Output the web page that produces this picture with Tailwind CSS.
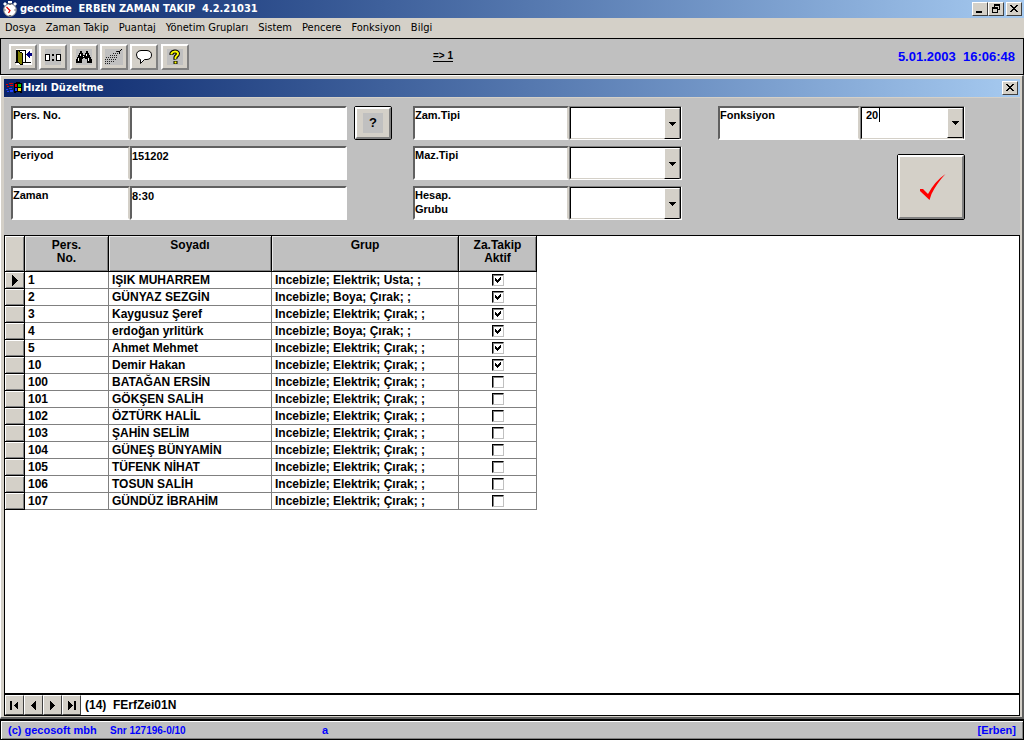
<!DOCTYPE html>
<html lang="tr">
<head>
<meta charset="utf-8">
<title>gecotime ERBEN ZAMAN TAKIP</title>
<script src="https://cdn.jsdelivr.net/npm/@tailwindcss/browser@4"></script>
</head>
<body class="flex h-screen flex-col overflow-hidden bg-[#d4d0c8] font-['Liberation_Sans',Arial,sans-serif] text-[11px] font-bold text-black">

<!-- Title bar -->
<header class="flex h-[18px] shrink-0 items-center bg-linear-to-r from-[#0a246a] to-[#a6caf0] pr-[2px] pl-[2px]">
  <svg class="mr-[2px] size-4" viewBox="0 0 16 16" aria-hidden="true">
    <path d="M6 0h4v2h-4zM1 3l2-2 2 2-2 2zM11 3l2-2 2 2-2 2z" fill="#fff"/>
    <circle cx="8" cy="9" r="6.3" fill="#fff" stroke="#888" stroke-width="1"/>
    <path d="M8 3v1M8 14v1M2.500 9h1M12.500 9h1" stroke="#000"/>
    <path d="M4.500 6L8 9.500L6.500 12" stroke="#e00000" stroke-width="1.300" fill="none"/>
  </svg>
  <h1 class="grow font-['DejaVu_Sans_Condensed','DejaVu_Sans',sans-serif] text-[11px] leading-[18px] whitespace-pre text-white">gecotime  ERBEN ZAMAN TAKIP  4.2.21031</h1>
  <button aria-label="Simge durumuna küçült" class="flex h-[14px] w-4 items-center justify-center border border-t-white border-r-[#404040] border-b-[#404040] border-l-white bg-[#d4d0c8]">
    <svg width="12" height="10" shape-rendering="crispEdges"><path d="M2 7h6v2H2z"/></svg>
  </button>
  <button aria-label="Önceki boyut" class="mr-[2px] flex h-[14px] w-4 items-center justify-center border border-t-white border-r-[#404040] border-b-[#404040] border-l-white bg-[#d4d0c8]">
    <svg width="12" height="10" shape-rendering="crispEdges"><path d="M4 0h6v6H8V5h1V2H5v1H4zM2 3h6v6H2zM3 5v3h4V5z" fill-rule="evenodd"/></svg>
  </button>
  <button aria-label="Kapat" class="flex h-[14px] w-4 items-center justify-center border border-t-white border-r-[#404040] border-b-[#404040] border-l-white bg-[#d4d0c8]">
    <svg width="12" height="10" shape-rendering="crispEdges"><path d="M2 1h2v1h1v1h2V2h1V1h2v1H9v1H8v1H7v1h1v1h1v1h1v1H8V7H7V6H5v1H4v1H2V7h1V6h1V5h1V4H4V3H3V2H2z"/></svg>
  </button>
</header>

<!-- Menu -->
<nav class="flex h-5 shrink-0 items-center gap-[10px] px-[5px] font-['DejaVu_Sans_Condensed','DejaVu_Sans',sans-serif] text-[11px] font-normal">
  <a href="#">Dosya</a><a href="#">Zaman Takip</a><a href="#">Puantaj</a><a href="#">Yönetim Grupları</a><a href="#">Sistem</a><a href="#">Pencere</a><a href="#">Fonksiyon</a><a href="#">Bilgi</a>
</nav>

<!-- Toolbar -->
<div class="grid h-[37px] shrink-0 grid-cols-[1fr_auto_1fr] items-center border border-black bg-[#c0c0c0] px-2">
  <div class="flex gap-[2px]">
    <button aria-label="Çıkış" class="flex h-[26px] w-7 items-center justify-center border-2 border-t-white border-r-[#808080] border-b-[#808080] border-l-white bg-[#d4d0c8]">
      <svg width="17" height="16" shape-rendering="crispEdges"><path fill="#fff" d="M1 0h16v16H1z"/><path d="M1 1h10v12h5v1H0v-1h1zM2 2v11h8V2z" fill-rule="evenodd"/><path d="M2 1l5 3v12l-5-3z" fill="#808000" stroke="#000"/><path d="M11 5h1V4h1V3h1V2h1v2h2v3h-2v2h-1V8h-1V7h-1V6h-1z" fill="#000080"/></svg>
    </button>
    <button aria-label="Saat" class="flex h-[26px] w-7 items-center justify-center border-2 border-t-white border-r-[#808080] border-b-[#808080] border-l-white bg-[#d4d0c8]">
      <svg width="16" height="16" shape-rendering="crispEdges"><path fill="#c0c0c0" d="M0 0h16v16H0z"/><path fill="#fff" stroke="#000" d="M.5 5.500h4v6h-4zM11.500 5.500h4v6h-4z"/><path d="M7 5h2v2H7zM7 10h2v2H7z"/></svg>
    </button>
    <button aria-label="Bul" class="ml-px flex h-[26px] w-7 items-center justify-center border-2 border-t-white border-r-[#808080] border-b-[#808080] border-l-white bg-[#d4d0c8]">
      <svg width="16" height="16" shape-rendering="crispEdges"><path fill="#c0c0c0" d="M0 0h16v16H0z"/><path d="M4 2h2v2h1v2h2V4h1V2h2v2h1v2h1v2h1v2h1v4h-5v-4H9V9H7v1H6v4H0v-4h1V8h1V6h1V4h1z"/><path fill="#fff" d="M4 5h1v2H4zM2 9h1v3H2zM10 5h1v2h-1zM12 9h1v3h-1zM7 7h1v1H7z"/></svg>
    </button>
    <button aria-label="Grafik" class="flex h-[26px] w-7 items-center justify-center border-2 border-t-white border-r-[#808080] border-b-[#808080] border-l-white bg-[#d4d0c8]">
      <svg width="18" height="18" shape-rendering="crispEdges">
        <path fill="#c0c0c0" d="M0 1h18v16H0z"/>
        <path stroke="#222" fill="none" stroke-dasharray="1 1" d="M11 3.500h4M8 5.500h6M5 7.500h8M1 9.500h12M0 11.500h11M0 13.500h9M0 15.500h6"/>
        <path stroke="#000" fill="none" d="M12 3.500h3M14.500 3v3M15 2.500h1M16 1.500h1"/>
      </svg>
    </button>
    <button aria-label="Mesaj" class="flex h-[26px] w-7 items-center justify-center border-2 border-t-white border-r-[#808080] border-b-[#808080] border-l-white bg-[#d4d0c8]">
      <svg width="18" height="16"><path d="M6 1.500h6q4.500.5 4.500 4.500t-4.500 4.500H9.500l-4 4v-4q-4-.5-4-4.500T6 1.500z" fill="#fff" stroke="#000"/></svg>
    </button>
    <button aria-label="Yardım" class="ml-px flex h-[26px] w-7 items-center justify-center border-2 border-t-white border-r-[#808080] border-b-[#808080] border-l-white bg-[#d4d0c8]">
      <svg width="16" height="16"><path fill="#c0c0c0" d="M0 0h16v16H0z"/><path d="M4.500 6V4.500Q5.500 2.500 8 2.500t3 2q0 1.500-1.500 2.500T8.500 10.500M8.500 12v3" fill="none" stroke="#000" stroke-width="4"/><path d="M4.500 5.500V4.500Q5.500 2.500 8 2.500t3 2q0 1.500-1.500 2.500T8.500 10M8.500 12.500v2" fill="none" stroke="#ff0" stroke-width="2"/></svg>
    </button>
  </div>
  <a href="#" class="mr-[138px] border-b border-black text-[10px] leading-[10px]">=&gt; 1</a>
  <time class="justify-self-end text-[13px] whitespace-pre text-[#0000ff]">5.01.2003  16:06:48</time>
</div>

<!-- Child window -->
<main class="flex min-h-0 grow flex-col border-t border-r-2 border-b-2 border-l border-t-white border-r-[#606060] border-b-[#606060] border-l-white pt-[3px] pr-[2px] pb-px pl-[3px]">
  <div class="flex h-[18px] shrink-0 items-center bg-linear-to-r from-[#0a246a] to-[#a6caf0] pr-[2px] pl-[2px]">
    <svg class="mr-px h-[14px] w-4" viewBox="0 0 16 14" shape-rendering="crispEdges" aria-hidden="true">
      <path fill="#000" d="M8 2l4-1 4 1v10l-4-1-4 1z"/>
      <path fill="#e00000" d="M0 3h2v1H0zM3 2h2v1H3zM1 5h2v1H1zM4 4h3v1H4zM5 2h2v1H5zM9 3h2v3H9z"/>
      <path fill="#00d000" d="M12 3h3v3h-3z"/>
      <path fill="#2040ff" d="M0 8h2v1H0zM3 7h3v1H3zM1 10h2v1H1zM4 9h3v2H4zM9 7h2v3H9z"/>
      <path fill="#ffe000" d="M12 7h3v3h-3z"/>
    </svg>
    <h2 class="grow font-['DejaVu_Sans_Condensed','DejaVu_Sans',sans-serif] text-[11px] text-white">Hızlı Düzeltme</h2>
    <button aria-label="Pencereyi kapat" class="flex h-[14px] w-4 items-center justify-center border border-t-white border-r-[#404040] border-b-[#404040] border-l-white bg-[#d4d0c8]">
      <svg width="12" height="10" shape-rendering="crispEdges"><path d="M2 1h2v1h1v1h2V2h1V1h2v1H9v1H8v1H7v1h1v1h1v1h1v1H8V7H7V6H5v1H4v1H2V7h1V6h1V5h1V4H4V3H3V2H2z"/></svg>
    </button>
  </div>

  <!-- Form -->
  <form class="mt-px flex shrink-0 items-start bg-[#c0c0c0] pt-2 pb-[15px] pl-[7px] leading-[14px]">
    <div class="grid grid-cols-[119px_217px] gap-y-[6px]">
      <label for="pers" class="h-[34px] border-2 border-t-[#606060] border-r-[#d4d0c8] border-b-white border-l-[#606060] bg-white">Pers. No.</label>
      <input id="pers" class="h-[34px] min-w-0 border-2 border-t-[#606060] border-r-white border-b-white border-l-[#606060] bg-white pb-[14px]">
      <label for="periyod" class="h-[34px] border-2 border-t-[#606060] border-r-[#d4d0c8] border-b-white border-l-[#606060] bg-white">Periyod</label>
      <input id="periyod" value="151202" class="h-[34px] min-w-0 border-2 border-t-[#606060] border-r-white border-b-white border-l-[#606060] bg-white pb-[14px]">
      <label for="zaman" class="h-[34px] border-2 border-t-[#606060] border-r-[#d4d0c8] border-b-white border-l-[#606060] bg-white">Zaman</label>
      <input id="zaman" value="8:30" class="h-[34px] min-w-0 border-2 border-t-[#606060] border-r-white border-b-white border-l-[#606060] bg-white pb-[14px]">
    </div>
    <button type="button" class="ml-[7px] h-[34px] w-[38px] rounded-[2px] border border-black">
      <span class="flex h-full items-center justify-center border-2 border-t-white border-r-[#808080] border-b-[#808080] border-l-white bg-[#d4d0c8]"><span class="w-5 bg-[#c0c0c0] text-[13px] leading-5">?</span></span>
    </button>

    <div class="ml-[21px] grid grid-cols-[156px_113px] gap-y-[6px]">
      <label for="zam" class="h-[34px] border-2 border-t-[#606060] border-r-[#d4d0c8] border-b-white border-l-[#606060] bg-white">Zam.Tipi</label>
      <div class="grid h-[34px] border border-t-[#808080] border-r-white border-b-white border-l-[#808080]">
        <select id="zam" class="col-start-1 row-start-1 appearance-none border border-b-[#d4d0c8] border-t-black border-x-black bg-white"><option></option></select>
        <span class="pointer-events-none col-start-1 row-start-1 mt-px mr-px flex w-4 items-center justify-center justify-self-end border border-t-white border-r-[#808080] border-b-black border-l-white bg-[#d4d0c8]"><svg width="7" height="4" shape-rendering="crispEdges"><path d="M0 0h7v1H6v1H5v1H4v1H3V3H2V2H1V1H0z"/></svg></span>
      </div>
      <label for="maz" class="h-[34px] border-2 border-t-[#606060] border-r-[#d4d0c8] border-b-white border-l-[#606060] bg-white">Maz.Tipi</label>
      <div class="grid h-[34px] border border-t-[#808080] border-r-white border-b-white border-l-[#808080]">
        <select id="maz" class="col-start-1 row-start-1 appearance-none border border-b-[#d4d0c8] border-t-black border-x-black bg-white"><option></option></select>
        <span class="pointer-events-none col-start-1 row-start-1 mt-px mr-px flex w-4 items-center justify-center justify-self-end border border-t-white border-r-[#808080] border-b-black border-l-white bg-[#d4d0c8]"><svg width="7" height="4" shape-rendering="crispEdges"><path d="M0 0h7v1H6v1H5v1H4v1H3V3H2V2H1V1H0z"/></svg></span>
      </div>
      <label for="hesap" class="h-[34px] border-2 border-t-[#606060] border-r-[#d4d0c8] border-b-white border-l-[#606060] bg-white">Hesap.<br>Grubu</label>
      <div class="grid h-[34px] border border-t-[#808080] border-r-white border-b-white border-l-[#808080]">
        <select id="hesap" class="col-start-1 row-start-1 appearance-none border border-b-[#d4d0c8] border-t-black border-x-black bg-white"><option></option></select>
        <span class="pointer-events-none col-start-1 row-start-1 mt-px mr-px flex w-4 items-center justify-center justify-self-end border border-t-white border-r-[#808080] border-b-black border-l-white bg-[#d4d0c8]"><svg width="7" height="4" shape-rendering="crispEdges"><path d="M0 0h7v1H6v1H5v1H4v1H3V3H2V2H1V1H0z"/></svg></span>
      </div>
    </div>

    <div class="ml-9 flex flex-col items-end gap-[14px]">
      <div class="grid grid-cols-[142px_105px]">
        <label for="fonk" class="h-[34px] border-2 border-t-[#606060] border-r-[#d4d0c8] border-b-white border-l-[#606060] bg-white">Fonksiyon</label>
        <div class="h-[34px] border border-t-[#808080] border-r-white border-b-white border-l-[#808080]">
          <div class="flex h-full border border-x-black border-t-black border-b-[#d4d0c8] bg-white pl-1">
            <input id="fonk" value="20" class="h-[14px] w-[13px] outline-none">
            <span class="h-[14px] w-px bg-black"></span>
            <button type="button" aria-label="Listeyi aç" class="ml-auto flex w-4 items-center justify-center border border-t-white border-r-[#808080] border-b-black border-l-white bg-[#d4d0c8]"><svg width="7" height="4" shape-rendering="crispEdges"><path d="M0 0h7v1H6v1H5v1H4v1H3V3H2V2H1V1H0z"/></svg></button>
          </div>
        </div>
      </div>
      <button type="submit" aria-label="Onayla" class="h-[66px] w-[68px] rounded-[2px] border border-black">
        <span class="flex h-full items-center justify-center border-2 border-t-white border-r-[#808080] border-b-[#808080] border-l-white bg-[#d4d0c8]"><svg class="ml-1" width="26" height="26"><path d="M0 15h3l5 5Q15 7 25.500 0 17 9 11.500 20L9.500 26 0 17z" fill="#f00"/></svg></span>
      </button>
    </div>
  </form>

  <!-- Records -->
  <section class="flex min-h-0 grow flex-col border-x border-t border-black bg-white">
    <table class="w-[532px] table-fixed border-separate border-spacing-0 text-left text-xs leading-4">
      <colgroup><col class="w-5"><col class="w-[84px]"><col class="w-[163px]"><col class="w-[187px]"><col class="w-[78px]"></colgroup>
      <thead class="bg-[#c0c0c0] text-center leading-[13px]">
        <tr class="h-9 *:border-r *:border-b *:border-black *:p-0 *:align-top">
          <td class="bg-[#d4d0c8] shadow-[inset_1px_1px_#fff,inset_-1px_-1px_#808080]"></td>
          <th class="shadow-[inset_1px_1px_#e8e8e8,inset_-1px_-1px_#808080]"><div class="pt-[3px]">Pers.<br>No.</div></th>
          <th class="shadow-[inset_1px_1px_#e8e8e8,inset_-1px_-1px_#808080]"><div class="pt-[3px]">Soyadı</div></th>
          <th class="shadow-[inset_1px_1px_#e8e8e8,inset_-1px_-1px_#808080]"><div class="pt-[3px]">Grup</div></th>
          <th class="shadow-[inset_1px_1px_#e8e8e8,inset_-1px_-1px_#808080]"><div class="pt-[3px]">Za.Takip<br>Aktif</div></th>
        </tr>
      </thead>
      <tbody id="rows"></tbody>
    </table>
  </section>
  <div class="flex h-[23px] shrink-0 items-stretch border-x border-t-2 border-b border-black bg-white text-xs">
    <button aria-label="İlk kayıt" class="flex w-[19px] items-center justify-center border border-t-white border-r-[#404040] border-b-[#404040] border-l-white bg-[#d4d0c8]"><svg width="9" height="9" shape-rendering="crispEdges"><path d="M0 0h2v9H0zM8 0v9L3.500 4.500z"/></svg></button>
    <button aria-label="Önceki kayıt" class="flex w-[19px] items-center justify-center border border-t-white border-r-[#404040] border-b-[#404040] border-l-white bg-[#d4d0c8]"><svg width="9" height="9" shape-rendering="crispEdges"><path d="M7 0v9L2 4.500z"/></svg></button>
    <button aria-label="Sonraki kayıt" class="flex w-[19px] items-center justify-center border border-t-white border-r-[#404040] border-b-[#404040] border-l-white bg-[#d4d0c8]"><svg width="9" height="9" shape-rendering="crispEdges"><path d="M2 0v9l5-4.500z"/></svg></button>
    <button aria-label="Son kayıt" class="flex w-[19px] items-center justify-center border border-t-white border-r-[#404040] border-b-[#404040] border-l-white bg-[#d4d0c8]"><svg width="9" height="9" shape-rendering="crispEdges"><path d="M7 0h2v9H7zM1 0v9l4.500-4.500z"/></svg></button>
    <span class="self-center pl-1 whitespace-pre">(14)  FErfZei01N</span>
  </div>
</main>

<!-- Status bar -->
<footer class="grid h-[21px] shrink-0 grid-cols-[102px_212px_1fr_auto] items-center border border-t-2 border-black bg-[#c0c0c0] px-[7px] text-[#0000ff] shadow-[inset_1px_1px_#fff,inset_-1px_-1px_#808080]">
  <span>(c) gecosoft mbh</span><span class="text-[10px]">Snr 127196-0/10</span><span>a</span><span>[Erben]</span>
</footer>

<template id="row">
  <tr class="h-[17px] *:border-r *:border-b *:border-[#808080] *:p-0">
    <th class="border-black! bg-[#d4d0c8] shadow-[inset_1px_1px_#fff,inset_-1px_-1px_#808080]"><svg class="mx-auto hidden" width="6" height="11" shape-rendering="crispEdges"><path d="M0 0v11l6-5.500z"/></svg></th>
    <td class="pl-[3px]!"></td>
    <td class="pl-[3px]!"></td>
    <td class="pl-[3px]!"></td>
    <td>
      <label class="grid justify-center">
        <input type="checkbox" aria-label="Za.Takip Aktif" class="peer col-start-1 row-start-1 size-3 appearance-none border border-t-black border-r-[#c0c0c0] border-b-[#c0c0c0] border-l-black bg-white shadow-[inset_1px_1px_#808080]">
        <svg class="pointer-events-none invisible col-start-1 row-start-1 peer-checked:visible" width="12" height="12" shape-rendering="crispEdges"><path d="M3 4h1v1h1v1h1V5h1V4h1V3h1v3H8v1H7v1H6v1H5V8H4V7H3z"/></svg>
      </label>
    </td>
  </tr>
</template>
<script>
  const E = "Incebizle; Elektrik; Çırak; ;", B = "Incebizle; Boya; Çırak; ;";
  const people = [
    [1, "IŞIK MUHARREM", "Incebizle; Elektrik; Usta; ;", true],
    [2, "GÜNYAZ SEZGİN", B, true],
    [3, "Kaygusuz Şeref", E, true],
    [4, "erdoğan yrlitürk", B, true],
    [5, "Ahmet Mehmet", E, true],
    [10, "Demir Hakan", E, true],
    [100, "BATAĞAN ERSİN", E, false],
    [101, "GÖKŞEN SALİH", E, false],
    [102, "ÖZTÜRK HALİL", E, false],
    [103, "ŞAHİN SELİM", E, false],
    [104, "GÜNEŞ BÜNYAMİN", E, false],
    [105, "TÜFENK NİHAT", E, false],
    [106, "TOSUN SALİH", E, false],
    [107, "GÜNDÜZ İBRAHİM", E, false]
  ];
  people.forEach((p, i) => {
    const r = document.getElementById("row").content.cloneNode(true);
    const td = r.querySelectorAll("td");
    for (let k = 0; k < 3; k++) td[k].textContent = p[k];
    r.querySelector("input").checked = p[3];
    if (i === 0) r.querySelector("th svg").classList.replace("hidden", "block");
    document.getElementById("rows").append(r);
  });
</script>
</body>
</html>
